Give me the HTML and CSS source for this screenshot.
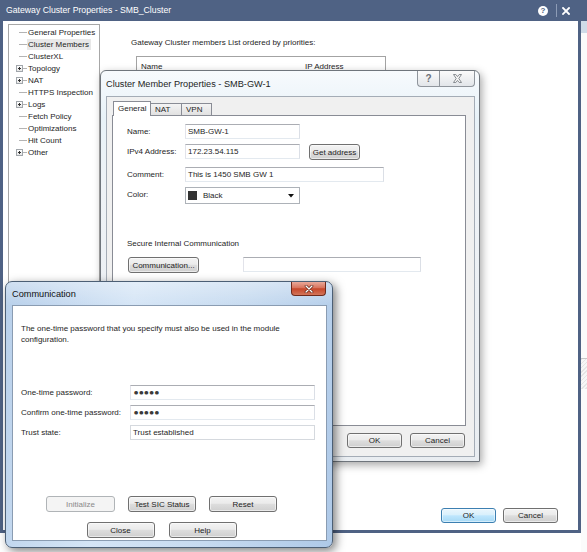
FILE: index.html
```html
<!DOCTYPE html>
<html>
<head>
<meta charset="utf-8">
<link rel="stylesheet" href="styles.css">
</head>
<body>
<div class="bg-strip"><div class="bg-top"></div><div class="bg-tint"></div><div class="bg-hatch"></div></div>

<div class="win main">
  <div class="main-title">
    <span class="main-title-text">Gateway Cluster Properties - SMB_Cluster</span>
    <span class="cap-icons">
      <span class="help-circle">?</span>
      <span class="cap-sep"></span>
      <svg class="cap-x" width="8" height="8" viewBox="0 0 8 8"><path d="M1 1L7 7M7 1L1 7" stroke="#fff" stroke-width="1.8" stroke-linecap="square"/></svg>
    </span>
  </div>
  <div class="main-body">
    <div class="main-top">
      <div class="tree">
        <div class="node"><span class="twig"></span><span class="lbl">General Properties</span></div>
        <div class="node"><span class="twig"></span><span class="lbl sel">Cluster Members</span></div>
        <div class="node"><span class="twig"></span><span class="lbl">ClusterXL</span></div>
        <div class="node"><span class="exp"></span><span class="twig short"></span><span class="lbl">Topology</span></div>
        <div class="node"><span class="exp"></span><span class="twig short"></span><span class="lbl">NAT</span></div>
        <div class="node"><span class="twig"></span><span class="lbl">HTTPS Inspection</span></div>
        <div class="node"><span class="exp"></span><span class="twig short"></span><span class="lbl">Logs</span></div>
        <div class="node"><span class="twig"></span><span class="lbl">Fetch Policy</span></div>
        <div class="node"><span class="twig"></span><span class="lbl">Optimizations</span></div>
        <div class="node"><span class="twig"></span><span class="lbl">Hit Count</span></div>
        <div class="node"><span class="exp"></span><span class="twig short"></span><span class="lbl">Other</span></div>
      </div>
      <div class="members">
        <div class="members-label">Gateway Cluster members List ordered by priorities:</div>
        <div class="members-table">
          <div class="th"><span class="col-name">Name</span><span class="col-ip">IP Address</span></div>
        </div>
      </div>
    </div>
    <div class="main-buttons">
      <button class="btn default w55">OK</button>
      <button class="btn w55">Cancel</button>
    </div>
  </div>
</div>

<div class="win cm">
  <div class="cm-title">
    <span>Cluster Member Properties - SMB-GW-1</span>
    <div class="cm-caps">
      <span class="cap-btn cap-help">?</span>
      <span class="cap-btn cap-close"><svg width="11" height="9" viewBox="0 0 11 9"><path d="M1.5 0.5H3.8L5.5 2.6L7.2 0.5H9.5L6.8 4.5L9.5 8.5H7.2L5.5 6.4L3.8 8.5H1.5L4.2 4.5Z" fill="#f4f4f4" stroke="#7d8187" stroke-width="0.9"/></svg></span>
    </div>
  </div>
  <div class="cm-client">
    <div class="tabs">
      <span class="tab active t-gen">General</span>
      <span class="tab t-nat">NAT</span>
      <span class="tab t-vpn">VPN</span>
    </div>
    <div class="page">
      <div class="frow"><span class="flabel">Name:</span><span class="tb w115">SMB-GW-1</span></div>
      <div class="frow r-ip"><span class="flabel">IPv4 Address:</span><span class="tb w115">172.23.54.115</span><button class="btn get">Get address</button></div>
      <div class="frow r-comment"><span class="flabel">Comment:</span><span class="tb w199">This is 1450 SMB GW 1</span></div>
      <div class="frow r-color"><span class="flabel">Color:</span>
        <span class="combo"><span class="swatch"></span><span class="combo-text">Black</span><svg class="combo-arrow" width="6" height="4" viewBox="0 0 6 4"><path d="M0 0H6L3 3.5Z" fill="#111"/></svg></span>
      </div>
      <div class="sic-label">Secure Internal Communication</div>
      <div class="frow r-sic"><button class="btn commbtn">Communication...</button><span class="tb w178"></span></div>
    </div>
    <div class="cm-buttons">
      <button class="btn w55">OK</button>
      <button class="btn w55">Cancel</button>
    </div>
  </div>
</div>

<div class="win comm">
  <div class="comm-title">
    <span>Communication</span>
    <span class="red-close"><svg width="10" height="8" viewBox="0 0 10 8"><path d="M2 1L8 7M8 1L2 7" stroke="#5a1a0c" stroke-width="2.6" stroke-linecap="round"/><path d="M2 1L8 7M8 1L2 7" stroke="#fff" stroke-width="1.4" stroke-linecap="round"/></svg></span>
  </div>
  <div class="comm-client">
    <div class="comm-text">The one-time password that you specify must also be used in the module<br>configuration.</div>
    <div class="prows">
      <div class="prow"><span class="plabel">One-time password:</span><span class="tb w185 dots">●●●●●</span></div>
      <div class="prow"><span class="plabel">Confirm one-time password:</span><span class="tb w185 dots">●●●●●</span></div>
      <div class="prow"><span class="plabel">Trust state:</span><span class="tb w185 ro">Trust established</span></div>
    </div>
    <div class="btnrows">
      <div class="brow r1">
        <button class="btn disabled w69">Initialize</button>
        <button class="btn w68">Test SIC Status</button>
        <button class="btn w68">Reset</button>
      </div>
      <div class="brow r2">
        <button class="btn w68">Close</button>
        <button class="btn w68">Help</button>
      </div>
    </div>
  </div>
</div>
</body>
</html>
```

FILE: styles.css
```css
body {
  margin: 0;
  width: 587px;
  height: 552px;
  position: relative;
  overflow: hidden;
  background: #ffffff;
  font-family: "Liberation Sans", Arial, sans-serif;
  font-size: 8px;
  color: #1e1e1e;
}

/* background window edge at the right */
.bg-strip {
  position: absolute;
  left: 581px;
  top: 0;
  width: 6px;
  height: 552px;
  background: #fbfbfb;
  display: flex;
  flex-direction: column;
}
.bg-top { height: 21px; background: #4f6284; }
.bg-tint { height: 12px; background: #cfdbe8; }
.bg-hatch {
  margin-top: 325px;
  height: 30px;
  border-top: 1px solid #c8c8c8;
  background: repeating-linear-gradient(135deg, #e4e4e4 0 1px, #f6f6f6 1px 3px);
}

.win { position: absolute; box-sizing: border-box; }

/* ---------- main window ---------- */
.main {
  left: 0;
  top: 0;
  width: 581px;
  height: 533px;
  background: #4f6284;
  padding: 0 3px 3px 3px;
  display: flex;
  flex-direction: column;
}
.main-title {
  height: 21px;
  flex: none;
  display: flex;
  align-items: center;
  padding-left: 3px;
  color: #ffffff;
  font-size: 8.7px;
}
.main-title-text { flex: 1; padding-bottom: 1px; }
.cap-icons { display: flex; align-items: center; margin-right: 8px; }
.help-circle {
  width: 10px;
  height: 10px;
  border-radius: 50%;
  background: #ffffff;
  color: #4f6284;
  font-weight: bold;
  font-size: 8px;
  line-height: 10px;
  text-align: center;
}
.cap-sep { width: 1px; height: 13px; background: #8d9cb6; margin: 0 5px 0 8px; }
.cap-x { display: block; }

.main-body {
  flex: 1;
  background: #ffffff;
  display: flex;
  flex-direction: column;
  padding: 3px 0 7px 5px;
  min-height: 0;
}
.main-top { flex: 1; display: flex; min-height: 0; }

.tree {
  width: 92px;
  height: 470px;
  flex: none;
  box-sizing: border-box;
  border: 1px solid #a7a7a7;
  padding-top: 1px;
}
.node {
  height: 12px;
  display: flex;
  align-items: center;
  padding-left: 10px;
  white-space: nowrap;
}
.twig { width: 8px; height: 0; border-top: 1px solid #b4b4b4; margin-right: 1px; }
.twig.short { width: 4px; }
.exp {
  width: 7px;
  height: 7px;
  box-sizing: border-box;
  margin-left: -3px;
  border: 1px solid #a1a6ab;
  background:
    linear-gradient(#333, #333) center / 3px 1px no-repeat,
    linear-gradient(#333, #333) center / 1px 3px no-repeat,
    linear-gradient(#ffffff, #e6e6e6);
}
.lbl { line-height: 11px; padding: 0 1px; margin-left: -1px; }
.lbl.sel { background: #e8e8e8; padding-right: 2px; }

.members { margin-left: 31px; padding-top: 14px; }
.members-label { line-height: 10px; }
.members-table {
  margin: 8px 0 0 5px;
  width: 250px;
  height: 150px;
  box-sizing: border-box;
  border: 1px solid #a3a3a3;
}
.th { height: 18px; display: flex; align-items: center; padding-left: 4px; }
.col-name { width: 164px; }

.main-buttons {
  flex: none;
  display: flex;
  justify-content: flex-end;
  gap: 7px;
  padding-right: 20px;
}

/* ---------- buttons & textboxes ---------- */
.btn {
  box-sizing: border-box;
  height: 16px;
  padding: 0;
  border: 1px solid #707070;
  border-radius: 3px;
  background: linear-gradient(#f3f3f3 0%, #ebebeb 45%, #dddddd 52%, #cfcfcf 100%);
  box-shadow: inset 0 0 0 1px rgba(255, 255, 255, 0.55);
  font-family: "Liberation Sans", Arial, sans-serif;
  font-size: 8px;
  color: #1e1e1e;
  line-height: 13px;
}
.btn.default {
  border-color: #3c7fb1;
  background: linear-gradient(#eaf6fd 0%, #d9f0fc 45%, #bee6fd 52%, #a7d9f5 100%);
  box-shadow: inset 0 0 0 1px rgba(255, 255, 255, 0.5);
}
.btn.disabled {
  border-color: #b0b4b7;
  background: #f4f4f4;
  color: #8a8a8a;
  box-shadow: none;
}
.w55 { width: 55px; height: 15px; }
.w68 { width: 68px; }
.w69 { width: 69px; }

.tb {
  box-sizing: border-box;
  height: 15px;
  border: 1px solid;
  border-color: #abadb3 #dbdfe6 #e3e9ef #e2e3ea;
  background: #ffffff;
  padding-left: 2px;
  line-height: 13px;
  white-space: nowrap;
  display: block;
}
.w115 { width: 115px; }
.w199 { width: 199px; }
.w178 { width: 178px; }
.w185 { width: 185px; }

/* ---------- cluster member dialog ---------- */
.cm {
  left: 100px;
  top: 70px;
  width: 380px;
  height: 392px;
  border: 1px solid #6f757c;
  border-radius: 6px 6px 0 0;
  background: linear-gradient(180deg, #f7fafd 0%, #e8f2f8 12%, #eef2f6 30%, #e9edf1 100%);
  padding: 0 4px 4px 5px;
  display: flex;
  flex-direction: column;
  box-shadow: 2px 3px 8px rgba(0, 0, 0, 0.35);
}
.cm-title {
  height: 25px;
  flex: none;
  position: relative;
  display: flex;
  align-items: center;
  font-size: 9.2px;
  color: #1e1e1e;
}
.cm-caps { position: absolute; top: 0; right: 0; display: flex; }
.cap-btn {
  box-sizing: border-box;
  height: 16px;
  border: 1px solid #8f959c;
  border-top: none;
  background: linear-gradient(#fbfbfb, #e2e5e9);
  display: flex;
  align-items: center;
  justify-content: center;
}
.cap-help {
  width: 22px;
  border-radius: 0 0 0 4px;
  border-right: none;
  color: #6c7077;
  font-weight: bold;
  font-size: 10px;
}
.cap-close { width: 36px; border-radius: 0 0 4px 0; }

.cm-client {
  flex: 1;
  background: #f0f0f0;
  border: 1px solid #a4acb6;
  display: flex;
  flex-direction: column;
  padding: 6px 8px 0 5px;
  min-height: 0;
}
.tabs {
  height: 12px;
  flex: none;
  display: flex;
  align-items: flex-end;
  padding-left: 1px;
  position: relative;
  z-index: 1;
}
.tab {
  box-sizing: border-box;
  height: 12px;
  border: 1px solid #898c95;
  border-bottom: none;
  background: linear-gradient(#f4f4f4, #e1e1e1);
  line-height: 11px;
  padding-left: 4px;
}
.tab.active { height: 15px; margin-bottom: -1px; background: #ffffff; line-height: 13px; }
.t-gen { width: 38px; }
.t-nat { width: 32px; margin-left: -1px; }
.t-vpn { width: 31px; margin-left: -1px; }

.page {
  flex: 1;
  background: #ffffff;
  border: 1px solid #898c95;
  padding: 8px 0 0 14px;
}
.frow { display: flex; align-items: flex-start; }
.flabel { width: 58px; line-height: 15px; flex: none; }
.r-ip, .r-color { margin-top: 5px; }
.r-comment { margin-top: 7px; }
.btn.get { width: 51px; margin-left: 9px; }
.combo {
  box-sizing: border-box;
  width: 115px;
  height: 17px;
  border: 1px solid #adb2b8;
  background: #ffffff;
  display: flex;
  align-items: center;
  padding-left: 2px;
}
.swatch { width: 9px; height: 9px; background: #333333; margin-right: 6px; }
.combo-text { flex: 1; }
.combo-arrow { margin-right: 5px; }
.sic-label { margin-top: 35px; line-height: 10px; }
.r-sic { margin-top: 8px; }
.commbtn { width: 71px; margin-left: 1px; margin-right: 44px; }

.cm-buttons {
  flex: none;
  display: flex;
  justify-content: flex-end;
  gap: 8px;
  margin: 7px 1px 8px 0;
}

/* ---------- communication dialog ---------- */
.comm {
  left: 5px;
  top: 281px;
  width: 328px;
  height: 267px;
  border: 1px solid #4c5f75;
  border-radius: 7px;
  background:
    linear-gradient(180deg, rgba(255, 255, 255, 0.35) 0%, rgba(255, 255, 255, 0) 9%),
    linear-gradient(100deg, #b7cfea 0%, #d5e5f6 35%, #c7dbf0 65%, #aec9e8 100%);
  padding: 0 5px 6px 6px;
  display: flex;
  flex-direction: column;
  box-shadow: 3px 3px 10px rgba(0, 0, 0, 0.5);
}
.comm-title {
  height: 23px;
  flex: none;
  position: relative;
  display: flex;
  align-items: center;
  font-size: 9.2px;
  color: #111111;
}
.red-close {
  position: absolute;
  top: 0;
  right: 1px;
  width: 35px;
  height: 14px;
  box-sizing: border-box;
  border: 1px solid #6f2a1c;
  border-top: none;
  border-radius: 0 0 4px 4px;
  background: linear-gradient(#e9a99a 0%, #d8735c 45%, #c7472a 52%, #d2755a 100%);
  display: flex;
  align-items: center;
  justify-content: center;
}
.comm-client {
  flex: 1;
  background: #ffffff;
  border: 1px solid #8a9cb2;
  padding: 17px 8px 0 8px;
  display: flex;
  flex-direction: column;
}
.comm-text { line-height: 11px; }
.prows { margin-top: 40px; }
.prow { display: flex; align-items: center; margin-top: 5px; }
.prow:first-child { margin-top: 0; }
.plabel { width: 109px; flex: none; }
.dots { font-family: "DejaVu Sans", sans-serif; font-size: 4.8px; letter-spacing: 1px; padding-left: 3px; color: #3a3a3a; }
.ro { border-color: #d5d9de; }

.btnrows { margin-top: 56px; padding-right: 16px; }
.brow { display: flex; justify-content: center; }
.r1 { gap: 13px; }
.r2 { gap: 14px; margin-top: 10px; }
```
